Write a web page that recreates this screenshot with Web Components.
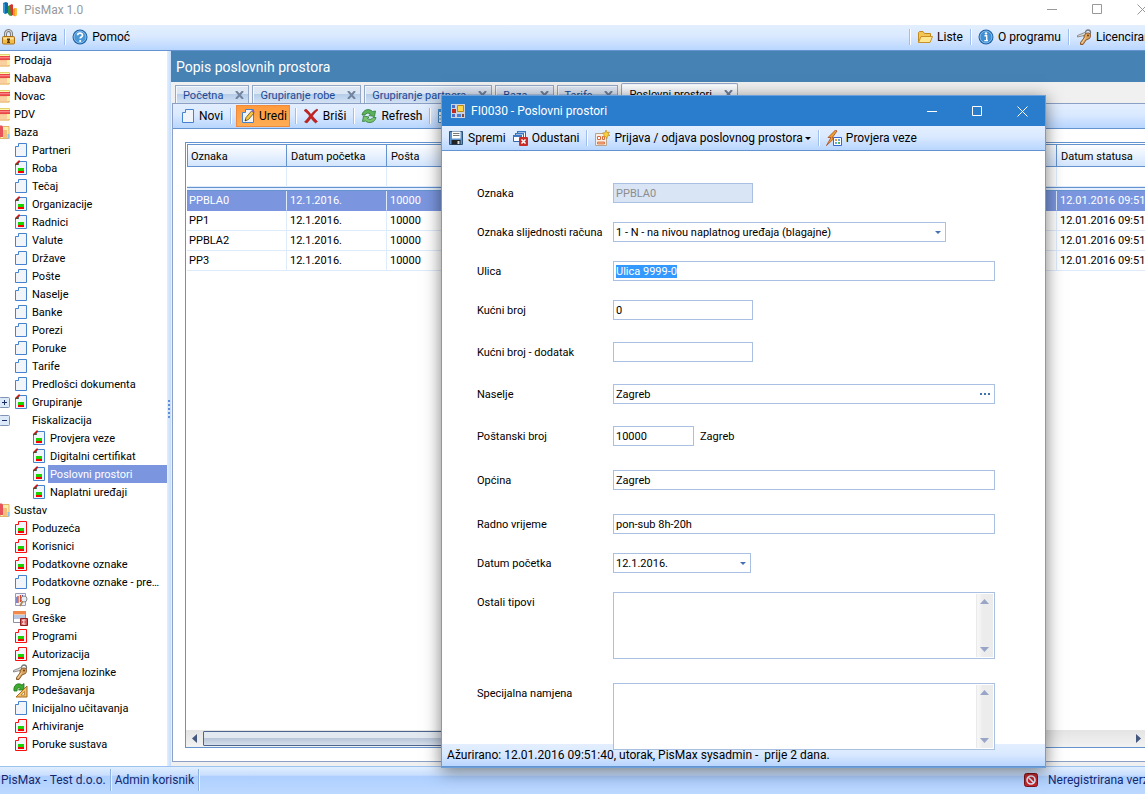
<!DOCTYPE html>
<html lang="hr">
<head>
<meta charset="utf-8">
<title>PisMax 1.0</title>
<style>
    html, body{ margin: 0; height: 100%; overflow: hidden; }
    body{
        --line: #6593cf;
        --pale: #deebfb;
        --bar: linear-gradient(#e3efff, #dae9ff 45%, #b9d6ff);
        font-family: Roboto, "Open Sans", "Liberation Sans", sans-serif;
        font-size: 11px;
        color: #000;
        background: #fff;
    }
</style>
</head>
<body>
<pis-app></pis-app>

<script>
const DOC = (edge, extra = '') => `
    <path d="M6.500 1.500H14.500V14.500H3.500V4.500H6.500Z" fill="#f1f5fa" stroke="${edge}"/>${extra}`;
const BARS = '<path d="M6 8h6v3H6z" fill="#19d400"/><path d="M6 11h6v2H6z" fill="#f00"/>';

/** Drawings of all icons, on a 16x16 canvas */
const ICONS = {
    app: `<path d="M1 2l3-1 2 1v10l-3 1-2-2z" fill="#1267a8"/><path d="M1 2l2 1v10l-2-2z" fill="#2f9bd8"/>
        <path d="M6 5l2-1 2 1v9l-2 1-2-2z" fill="#2e9a3c"/><path d="M8 4l2-1 1 1v10l-2 1z" fill="#d8322a"/>
        <path d="M11 8l2-1 2 1v6l-2 1.500-2-1z" fill="#f29a1c"/><path d="M13 8l2-1v7l-2 1z" fill="#ffc23d"/>`,
    lock: `<path d="M4.500 8V5a3 3.500 0 0 1 6 0v3" fill="none" stroke="#777" stroke-width="3"/>
        <path d="M4.500 8V5a3 3.500 0 0 1 6 0v3" fill="none" stroke="#d9d9d9" stroke-width="1.200"/>
        <rect x="1.500" y="7.500" width="12" height="7.500" rx="1" fill="#f3bd4a" stroke="#a8701c"/>
        <path d="M2.500 8.500h10v2h-10z" fill="#ffe59a"/><path d="M6 9.500h3v1.500H8.500v2h.5v1H6v-1h.5v-2H6z" fill="#5a3a12"/>`,
    help: `<circle cx="8" cy="8" r="7.500" fill="#1b5fa6"/><circle cx="8" cy="8" r="6" fill="#4a97d6" stroke="#9fd0f5" stroke-width=".8"/>
        <path d="M5.600 6.300C5.600 3.300 10.500 3.300 10.500 6.200 10.500 8 8.200 8 8.200 9.600" fill="none" stroke="#fff" stroke-width="1.700"/><circle cx="8.200" cy="12" r="1.100" fill="#fff"/>`,
    info: `<circle cx="8" cy="8" r="7.500" fill="#1b5fa6"/><circle cx="8" cy="8" r="6" fill="#3f8fd2" stroke="#9fd0f5" stroke-width=".8"/>
        <circle cx="8" cy="4.400" r="1.200" fill="#fff"/><path d="M6.500 6.800H8.700V11.500H10M6.300 11.600H10" fill="none" stroke="#fff" stroke-width="1.400"/>`,
    opened: `<path d="M1.500 13.500V3.500l1-1H6l1.500 2h6v3" fill="#f3c552" stroke="#c08a1e"/>
        <path d="M1.500 13.500L4 7.500h11.500L13 13.500z" fill="#ffe68f" stroke="#c8902a"/>`,
    keys: `<circle cx="12" cy="3.500" r="2.500" fill="none" stroke="#777" stroke-width="1.300"/>
        <path d="M10 3L1.500 6.500v1.500L8 6.500" fill="#ddd" stroke="#777" stroke-width=".8"/>
        <path d="M12 4c3 0 3 3.500 1.500 5.500L10 11l-3 4.500H4.500v-2L8 9C7.500 6 9.500 4 12 4z" fill="#dca35c" stroke="#7d4f21" stroke-width=".9"/>
        <path d="M9.500 8.500L6 14" stroke="#f8d8a5"/><circle cx="12" cy="6.500" r="1" fill="#6a4018"/>`,
    folder: `<path d="M4 2.500h11.500v11.500H4z" fill="#fbf6a8" stroke="#e3d26c"/><path d="M2 8h13v6H2z" fill="#fbd0a0" stroke="#eeb273" stroke-width=".8"/><path d="M13 8h3v5h-3z" fill="#fbf0a0"/>
        <path d="M1 4h15.500v4H1z" fill="#ea4646"/><path d="M1 5h15v1.300H1z" fill="#fa8484"/>`,
    books: `<path d="M8 2.500h7v12H6z" fill="#fbeea8" stroke="#e2b469"/><path d="M9 6h4v8H9z" fill="#f5bf7a"/>
        <path d="M2 1.500h6l1 1.500v10H2z" fill="#e8525a"/><path d="M13.500 10h2v4.500h-2z" fill="#8dc4ea"/>`,
    doc: DOC('#4583d0'),
    form: DOC('#4583d0', '<path d="M3 6V4l3.500-3.500H8V2L6 3.500V5H4z" fill="#d01818"/><path d="M4.500 3.500h2V5h-2z" fill="#176b17"/>' + BARS),
    formRed: DOC('#f80f0f', BARS),
    log: `<path d="M3.500 1.500h10v12h-10z" fill="#f2f3fa" stroke="#9a9ab5"/><path d="M6 4v7M8.500 3v7" stroke="#d1482f" stroke-width="1.300"/><path d="M4.800 5v6M10.500 3v4" stroke="#4a5bb5"/>
        <circle cx="12" cy="7" r="3" fill="#e5eef5" stroke="#888"/><path d="M10.500 9.500L8 14" stroke="#a98a55" stroke-width="1.800"/>`,
    errors: `<path d="M1.500 1.500h12v11h-12z" fill="#fff" stroke="#8b8fa5"/><path d="M1 1h13v3.500H1z" fill="#f08a4b"/><path d="M2 8h11M2 6h11" stroke="#6f8fc5"/>
        <path d="M8.500 8.500h7v7h-7z" fill="#d65a5a" stroke="#8e2020"/><path d="M13.500 10h-3l1.800 2-1.800 2h3" fill="none" stroke="#fff"/>`,
    setup: `<path d="M2 9C1 3 6 0 10 3l2-1.500V8H6.500l2-2C6.500 5 5 6.500 5 9z" fill="#3faa32" stroke="#1e7318" stroke-width=".8"/>
        <path d="M15 4v11H4z" fill="#f5c266" stroke="#a66a1f"/><path d="M12.500 9.500v3.500H9z" fill="#fff" stroke="#a66a1f" stroke-width=".7"/>`,
    edit: DOC('#4583d0', `<path d="M6 13l1-3.500L12.500 3l2.500 2-5.500 6.500z" fill="#f6c73f" stroke="#604a16" stroke-width=".8"/>
        <path d="M12.500 3l1-1.200 2.200 1.900L15 5z" fill="#7d5bd0"/><path d="M6 13l.5-1.700 1 1z" fill="#222"/>`),
    remove: `<path d="M1 2.500L3 1c2 1.500 3.500 3.500 5 5.500C9.500 4.500 11.500 2.500 14 1l1 1c-2.500 2-4 4-5.500 6 1.500 2 3 3.500 5 5.500l-2 1.500C10.500 13.500 9.500 12 8 10c-1.500 2-2.500 3.500-4 5l-2.500-1C3.500 12 5 10 6.500 8 5 6 3.500 4.500 1 2.500z" fill="#c9211d" stroke="#8d1512" stroke-width=".5"/>`,
    refresh: `<path d="M1 7C2 1.500 8 0 11.500 3.500L14.500 3l-1 5.500L8 7.500l1.500-1.500C7.500 4.500 5 5 4 7z" fill="#5bb25b" stroke="#2e7a35" stroke-width=".8"/>
        <path d="M15 9.500C14 14.500 8 16 4.500 13l-3 .5 1-5.500L8 9l-1.500 1.500c2 1.500 4.500 1 5.500-1z" fill="#79c46f" stroke="#2e7a35" stroke-width=".8"/>`,
    table: `<path d="M1.500 1.500h13v13h-13z" fill="#fff" stroke="#3d85c6"/><path d="M1 1h14v3H1z" fill="#4b9be0"/><path d="M1 7.500h14M1 11h14M5.500 4v11M10.500 4v11" stroke="#5aa4da"/>`,
    save: `<path d="M1.500 1.500h13v13h-13z" fill="#5d93cc" stroke="#2b557f"/><path d="M4 1.500h8.500v7H4z" fill="#fff"/><path d="M5 3.500h6.500M5 5.500h6.500" stroke="#777"/>
        <path d="M3.500 10h9v4.500h-9z" fill="#222"/><path d="M9.500 11h2v3h-2z" fill="#ddd"/>`,
    cancel: `<path d="M5.500 1.500h8v6h-8z" fill="#fff" stroke="#3467ad"/><path d="M3.500 3.500h8v6h-8z" fill="#fff" stroke="#3467ad"/><path d="M1.500 5.500h8v6h-8z" fill="#fff" stroke="#3467ad"/>
        <path d="M1 5h9v2H1zM3 3h9v1.500H3zM5 1h9v1.500H5z" fill="#3c77c4"/><rect x="7" y="7" width="9" height="9" rx="1" fill="#c92c26"/>
        <path d="M9.500 9.500l4 4M13.500 9.500l-4 4" stroke="#fff" stroke-width="1.500"/>`,
    register: `<path d="M1.500 3.500h11v12h-11z" fill="#f7efe4" stroke="#b7a48d"/><path d="M3.500 6.500h3v3h-3zM8.500 6.500h2v3h-2z" fill="#fff" stroke="#d9673a"/><path d="M3.500 12h7v2h-7z" fill="#f3b08a" stroke="#d9673a" stroke-width=".8"/>
        <path d="M12 0l1 2.500L15.500 2 14 4l2 1.500-2.600.3L13 8.500l-1.500-2L9 7l1.300-2L8.500 3l2.500-.2z" fill="#f9cf3c" stroke="#b98010" stroke-width=".6"/>`,
    bolt: `<path d="M9.500 0L2 7.500h3L.5 15.500 8.500 8H6L11 1z" fill="#f1a02c" stroke="#a9481a" stroke-width=".8"/>
        <path d="M7.500 7.500h8v8h-8z" fill="#fff" stroke="#3467d0"/><path d="M9 9h2v2H9z" fill="#e79a3a"/><path d="M12 9h2v2h-2z" fill="#5cabe5"/><path d="M9 12h2v2H9z" fill="#5cabe5"/><path d="M12 12h2v2h-2z" fill="#5ab552"/>`,
    window: `<path d="M1 1h14v14H1z" fill="#c9d3e2"/><path d="M2 2h3v3H2zM2 11h3v3H2z" fill="#4a6fc4"/><path d="M2 6h4v4H2z" fill="#c22a1e"/>
        <path d="M7.500 2.500h6v6h-6z" fill="#ffd54a" stroke="#b98c13"/><path d="M7 11h4v3H7z" fill="#4a7fdc"/><path d="M12 11h2v3h-2z" fill="#8a4a3a"/>`,
    ban: `<rect x="1.500" y="1.500" width="13" height="13" rx="2" fill="#c1272d" stroke="#7c1418"/><circle cx="8" cy="8" r="4" fill="none" stroke="#dfe6f5" stroke-width="1.600"/><path d="M5 5l6 6" stroke="#dfe6f5" stroke-width="1.600"/>`
};

/** Icon from the list above, chosen with the name attribute */
class PisIcon extends HTMLElement{

    constructor(){
        super();
        this.attachShadow({mode: 'open'});
    }

    connectedCallback(){
        this.shadowRoot.innerHTML = `
            <style>
                :host{ display: block; flex: none; width: 16px; height: 16px; }
                svg{ display: block; }
            </style>
            <svg width="16" height="16" viewBox="0 0 16 16" aria-hidden="true">${ICONS[this.getAttribute('name')] || ''}</svg>
        `;
    }
}
customElements.define('pis-icon', PisIcon);

/** Toolbar. Its buttons and separators are slotted */
class PisToolbar extends HTMLElement{

    constructor(){
        super();
        this.attachShadow({mode: 'open'});
    }

    connectedCallback(){
        this.shadowRoot.innerHTML = `
            <style>
                :host{
                    display: flex; align-items: center; flex: none; box-sizing: border-box;
                    height: 25px; padding: 0 3px; white-space: nowrap;
                    background: var(--bar); border-bottom: 1px solid var(--line);
                }
                :host([main]){ height: 26px; padding: 0 2px 2px 0; margin-left: -2px; }
                ::slotted(pis-button){ margin: 0 1px; }
                ::slotted(hr){ flex: none; width: 1px; height: 16px; margin: 0 4px; border: 0; background: #9cbfef; box-shadow: 1px 0 #fff; }
                ::slotted(.end){ margin-left: auto !important; }
            </style>
            <slot></slot>
        `;
    }
}
customElements.define('pis-toolbar', PisToolbar);

/** Toolbar button: icon, text and, with the menu attribute, a drop-down arrow */
class PisButton extends HTMLElement{

    constructor(){
        super();
        this.attachShadow({mode: 'open'});
    }

    connectedCallback(){
        const arrow = this.hasAttribute('menu') ? '<i></i>' : '';
        this.shadowRoot.innerHTML = `
            <style>
                :host{ display: block; flex: none; }
                button{
                    display: flex; align-items: center; gap: 4px; height: 22px; padding: 0 1px;
                    font: inherit; font-size: 12px; color: #000; background: none; border: 1px solid transparent;
                }
                :host([active]) button{ padding: 0 2px; background: linear-gradient(#ff9a3d, #ffad55); border-color: #f08a3c; }
                i{ margin-left: -2px; border: 3px solid transparent; border-top-color: #000; border-bottom: 0; }
            </style>
            <button type="button"><pis-icon name="${this.getAttribute('icon')}"></pis-icon><slot></slot>${arrow}</button>
        `;
    }
}
customElements.define('pis-button', PisButton);

/** Minimize, maximize and close buttons of a window */
class PisWindowButtons extends HTMLElement{

    constructor(){
        super();
        this.attachShadow({mode: 'open'});
    }

    connectedCallback(){
        const button = (label, d) => `
            <button type="button" aria-label="${label}">
                <svg width="11" height="11" viewBox="0 0 11 11"><path d="${d}" fill="none" stroke="currentColor"/></svg>
            </button>`;
        this.shadowRoot.innerHTML = `
            <style>
                :host{ display: flex; margin-left: auto; }
                button{ display: grid; place-items: center; width: 45px; padding: 0; background: none; border: 0; color: inherit; }
            </style>
            ${button('Smanji', 'M0 5.500H10')}
            ${button('Povećaj', 'M.5 .5H9.500V9.500H.5Z')}
            ${button('Zatvori', 'M.5 .5L10.500 10.500M10.500 .5L.5 10.500')}
        `;
    }
}
customElements.define('pis-window-buttons', PisWindowButtons);

/** Menu tree on the left side */
class PisTree extends HTMLElement{

    constructor(){
        super();
        this.attachShadow({mode: 'open'});
    }

    connectedCallback(){
        this.render();
    }

    // [level, icon, text, state]
    get items(){
        return [
            [0, 'folder', 'Prodaja'], [0, 'folder', 'Nabava'], [0, 'folder', 'Novac'], [0, 'folder', 'PDV'],
            [0, 'books', 'Baza'],
            [1, 'doc', 'Partneri'], [1, 'form', 'Roba'], [1, 'doc', 'Tečaj'], [1, 'form', 'Organizacije'],
            [1, 'form', 'Radnici'], [1, 'doc', 'Valute'], [1, 'doc', 'Države'], [1, 'doc', 'Pošte'],
            [1, 'doc', 'Naselje'], [1, 'doc', 'Banke'], [1, 'doc', 'Porezi'], [1, 'doc', 'Poruke'],
            [1, 'doc', 'Tarife'], [1, 'doc', 'Predlošci dokumenta'],
            [1, 'form', 'Grupiranje', 'plus'], [1, 'none', 'Fiskalizacija', 'minus'],
            [2, 'form', 'Provjera veze'], [2, 'form', 'Digitalni certifikat'],
            [2, 'form', 'Poslovni prostori', 'selected'], [2, 'form', 'Naplatni uređaji'],
            [0, 'books', 'Sustav'],
            [1, 'formRed', 'Poduzeća'], [1, 'formRed', 'Korisnici'], [1, 'formRed', 'Podatkovne oznake'],
            [1, 'doc', 'Podatkovne oznake - pregled'], [1, 'log', 'Log'], [1, 'errors', 'Greške'],
            [1, 'formRed', 'Programi'], [1, 'formRed', 'Autorizacija'], [1, 'keys', 'Promjena lozinke'],
            [1, 'setup', 'Podešavanja'], [1, 'doc', 'Inicijalno učitavanja'],
            [1, 'formRed', 'Arhiviranje'], [1, 'formRed', 'Poruke sustava']
        ];
    }

    render(){
        const style = `
            <style>
                :host{ display: block; overflow: hidden; background: #fff; }
                ul{ list-style: none; margin: 0 0 0 -6px; padding: 0; }
                li{ display: flex; align-items: center; height: 18px; white-space: nowrap; }
                .pad{ flex: none; display: flex; justify-content: center; width: 18px; }
                .pad svg{ display: block; margin-left: 3px; }
                span{ overflow: hidden; text-overflow: ellipsis; box-sizing: border-box; height: 18px; padding: 1px 2px 0; margin-left: 2px; line-height: 17px; }
                .selected span{ flex: 1; background: #7b96df; color: #fff; }
            </style>
        `;
        const box = sign => `<svg width="11" height="11" viewBox="0 0 11 11">
            <rect x=".5" y=".5" width="10" height="10" rx="1" fill="#dce9f8" stroke="#7f93b5"/>
            <path d="M3 5.500H8${sign === 'plus' ? 'M5.500 3V8' : ''}" stroke="#1b2f66"/></svg>`;
        const rows = this.items.map(([level, icon, text, state]) => {
            const opener = state === 'plus' || state === 'minus';
            const pads = Array.from({length: level}, (_, i) =>
                `<div class="pad">${opener && i === level - 1 ? box(state) : ''}</div>`).join('');
            return `<li role="treeitem" class="${state || ''}">${pads}<pis-icon name="${icon}"></pis-icon><span>${text}</span></li>`;
        });
        this.shadowRoot.innerHTML = style + `<ul role="tree">${rows.join('')}</ul>`;
    }
}
customElements.define('pis-tree', PisTree);

/** Strip of document tabs */
class PisTabs extends HTMLElement{

    constructor(){
        super();
        this.attachShadow({mode: 'open'});
    }

    connectedCallback(){
        const tabs = ['Početna', 'Grupiranje robe', 'Grupiranje partnera', 'Baza', 'Tarife', 'Poslovni prostori'];
        this.shadowRoot.innerHTML = `
            <style>
                :host{ display: flex; align-items: flex-end; gap: 3px; height: 21px; padding-left: 4px; background: #f0f0f0; }
                button{
                    display: flex; align-items: center; gap: 12px; box-sizing: border-box; height: 18px; padding: 1px 4px 0 7px;
                    font: inherit; color: #1e4a94; border: 1px solid #93a7c8; border-bottom: 0; box-shadow: inset 1px 1px #f4f8fd;
                    background: linear-gradient(#dde7f4 45%, #b6cdea 50%, #d3e2f4); white-space: nowrap;
                }
                button:last-of-type{ height: 20px; color: #000; background: linear-gradient(#fff, #e9f1fc); border-radius: 2px 2px 0 0; }
                svg{ display: block; }
            </style>
            ${tabs.map(t => `<button type="button" role="tab">${t}
                <svg width="9" height="8" viewBox="0 0 9 8"><path d="M1 0L8 8M8 0L1 8" stroke="#72839f" stroke-width="2"/></svg></button>`).join('')}
        `;
    }
}
customElements.define('pis-tabs', PisTabs);

/** Data grid with filter row and horizontal scroll bar */
class PisGrid extends HTMLElement{

    constructor(){
        super();
        this.attachShadow({mode: 'open'});
    }

    connectedCallback(){
        this.render();
    }

    render(){
        const style = `
            <style>
                :host{ display: flex; flex-direction: column; overflow: hidden; border: 1px solid var(--line); background: #fff; }
                .view{ flex: 1; overflow: hidden; padding: 1px 0 0 1px; }
                table{ width: 100%; table-layout: fixed; border-collapse: separate; border-spacing: 0; }
                .c{ width: 100px; }
                .d{ width: 90px; }
                th, td{
                    box-sizing: border-box; height: 20px; padding: 0 3px; overflow: hidden; white-space: nowrap;
                    text-align: left; font-weight: normal; border-right: 1px solid var(--pale); border-bottom: 1px solid var(--pale);
                }
                td:first-child{ padding-left: 2px; }
                th{ height: 23px; padding: 1px 4px 0; background: linear-gradient(#fdfeff, #d3e5fd); border: solid var(--line); border-width: 1px 1px 1px 0; }
                th:first-child{ padding-left: 3px; border-left-width: 1px; }
                .line td{ height: 4px; padding: 0; border: solid var(--line); border-width: 1px 0; background: #e7f0fc; }
                .selected td{ background: #7b96df; color: #fff; border-bottom-color: #7b96df; }
                .scroll{ display: flex; align-items: center; height: 17px; background: linear-gradient(#e4e4e4, #f2f2f2); }
                .scroll svg{ flex: none; width: 17px; }
                .scroll i{ flex: 0 1 520px; height: 13px; border: 1px solid #4d648f; border-radius: 1px; background: linear-gradient(#e2e8ef 45%, #b9c6d8 50%, #d5dfec); }
                .scroll b{ flex: 1; }
            </style>
        `;
        const row = (code, cls) => `<tr class="${cls || ''}"><td>${code}</td><td>12.1.2016.</td><td>10000</td><td></td><td>12.01.2016 09:51:40</td></tr>`;
        const body = `
            <div class="view"><table>
                <colgroup><col class="c"><col class="c"><col class="c"><col><col class="d"></colgroup>
                <thead><tr><th>Oznaka</th><th>Datum početka</th><th>Pošta</th><th></th><th>Datum statusa</th></tr></thead>
                <tbody>
                    <tr><td></td><td></td><td></td><td></td><td></td></tr>
                    <tr class="line"><td colspan="5"></td></tr>
                    ${row('PPBLA0', 'selected')}${row('PP1')}${row('PPBLA2')}${row('PP3')}
                </tbody>
            </table></div>
            <div class="scroll">
                <svg height="9" viewBox="0 0 17 9"><path d="M11 0V9L6 4.500Z" fill="#44587f"/></svg><i></i><b></b>
                <svg height="9" viewBox="0 0 17 9"><path d="M6 0V9L11 4.500Z" fill="#44587f"/></svg>
            </div>
        `;
        this.shadowRoot.innerHTML = style + body;
    }
}
customElements.define('pis-grid', PisGrid);

/** Form field. type: text, select, lookup, date, memo. size: short, code, date, wide */
class PisField extends HTMLElement{

    constructor(){
        super();
        this.attachShadow({mode: 'open'});
    }

    connectedCallback(){
        this.render();
        const input = this.shadowRoot.querySelector('input');
        if(input && this.hasAttribute('marked')){
            input.focus();
            input.select();
        }
    }

    control(){
        const value = this.getAttribute('value') || '';
        const off = this.hasAttribute('disabled') ? 'disabled' : '';
        const input = `<input id="f" type="text" value="${value}" ${off}>`;
        switch(this.getAttribute('type')){
            case 'select': return `<select id="f"><option>${value}</option></select><i class="arrow"></i>`;
            case 'date': return input + '<button type="button" aria-label="Kalendar"><i class="arrow"></i></button>';
            case 'lookup': return input + `<button type="button" aria-label="Traži"><svg width="11" height="2" viewBox="0 0 11 2">
                <path d="M0 0h2v2H0zM4 0h2v2H4zM8 0h2v2H8z" fill="#4472b0"/></svg></button>`;
            case 'memo': return `<textarea id="f"></textarea><div class="bar">
                <svg width="9" height="5" viewBox="0 0 9 5"><path d="M0 5H9L4.500 0Z" fill="#98a5c7"/></svg>
                <svg width="9" height="5" viewBox="0 0 9 5"><path d="M0 0H9L4.500 5Z" fill="#98a5c7"/></svg></div>`;
            default: return input;
        }
    }

    render(){
        const style = `
            <style>
                :host{ display: flex; align-items: flex-start; height: 20px; margin-bottom: 22px; line-height: 21px; }
                :host([gap="small"]){ margin-bottom: 19px; }
                :host([gap="large"]){ margin-bottom: 24px; }
                :host([gap="none"]){ margin-bottom: 0; }
                :host([type="memo"]){ height: 67px; }
                label{ flex: none; width: 136px; white-space: nowrap; }
                .box{ display: flex; align-items: center; box-sizing: border-box; height: 100%; width: 382px; border: 1px solid #a9c0e2; background: #fff; }
                :host([size="short"]) .box{ width: 140px; }
                :host([size="code"]) .box{ width: 81px; }
                :host([size="date"]) .box{ width: 138px; }
                :host([size="wide"]) .box{ width: 333px; }
                :host([type="memo"]) .box{ align-items: stretch; }
                :host([disabled]) .box{ background: #d9e4f5; }
                input, select, textarea{
                    flex: 1; min-width: 0; box-sizing: border-box; margin: 0; padding: 0 2px; border: 0; outline: 0;
                    font: inherit; line-height: normal; color: #000; background: none; appearance: none; resize: none;
                }
                input:disabled{ color: #8d8d8d; }
                ::selection{ background: #3399ff; color: #fff; }
                button{ display: flex; padding: 0; background: none; border: 0; }
                button svg{ margin-right: 3px; }
                .arrow{ flex: none; margin-right: 4px; border: 3px solid transparent; border-top-color: #4472b0; border-bottom: 0; }
                .bar{ display: flex; flex-direction: column; justify-content: space-between; align-items: center; width: 17px; margin: 1px; padding: 5px 0; box-sizing: border-box; background: linear-gradient(90deg, #e4e4e4, #f8f8f8 10%, #ececec 40%); }
                ::slotted(*){ margin-left: 6px; }
            </style>
        `;
        this.shadowRoot.innerHTML = style + `
            <label for="f">${this.getAttribute('label')}</label>
            <div class="box">${this.control()}</div><slot></slot>`;
    }
}
customElements.define('pis-field', PisField);

/** Floating window with title, toolbar, form and footer */
class PisDialog extends HTMLElement{

    constructor(){
        super();
        this.attachShadow({mode: 'open'});
    }

    connectedCallback(){
        this.shadowRoot.innerHTML = `
            <style>
                :host{ display: block; box-sizing: border-box; background: #fff; border: 1px solid #69a0dc; box-shadow: 0 3px 16px rgba(0, 0, 0, .5); }
                header{ display: flex; height: 30px; background: #2a7ccd; color: #fff; font-size: 12px; }
                header pis-icon{ margin: 7px 5px 0 8px; }
                header span{ line-height: 30px; }
                form{ position: relative; z-index: 1; padding: 32px 35px 0; margin-bottom: -6px; }
                footer{ height: 22px; padding-left: 5px; line-height: 23px; font-size: 12px; background: var(--bar); border-bottom: 1px solid var(--line); white-space: pre; }
            </style>
            <header><pis-icon name="window"></pis-icon><span>${this.getAttribute('caption')}</span><pis-window-buttons></pis-window-buttons></header>
            <slot name="tools"></slot>
            <form><slot></slot></form>
            <footer>${this.getAttribute('footer')}</footer>
        `;
    }
}
customElements.define('pis-dialog', PisDialog);

/** Main window */
class PisApp extends HTMLElement{

    constructor(){
        super();
        this.attachShadow({mode: 'open'});
    }

    connectedCallback(){
        this.render();
    }

    render(){
        const style = `
            <style>
                /* the window is a little wider than the screen */
                :host{ display: flex; flex-direction: column; width: calc(100% + 20px); height: 100%; }
                .title{ display: flex; flex: none; align-items: stretch; height: 25px; padding: 0; color: #999; font-size: 12px; }
                .title pis-icon{ margin: 1px 6px 0 2px; }
                .title span{ line-height: 20px; }
                .title pis-window-buttons{ height: 19px; }
                .middle{ flex: 1; display: flex; min-height: 0; }
                pis-tree{ flex: none; width: 167px; }
                .split{ flex: none; display: flex; flex-direction: column; align-items: center; justify-content: center; gap: 2px; width: 4px; background: linear-gradient(90deg, #e3efff, #c4dcfb); }
                .split i{ width: 2px; height: 2px; background: #5e8fd6; }
                .work{ flex: 1; min-width: 0; display: flex; flex-direction: column; background: #f0f0f0; }
                h1{ flex: none; margin: 0; padding: 1px 0 0 5px; line-height: 30px; font-size: 14px; font-weight: normal; background: #4682b4; color: #fff; }
                .page{ flex: 1; min-height: 0; display: flex; flex-direction: column; margin: 0 4px 4px 1px; border: 1px solid #8ba0c4; background: #fff; }
                pis-grid{ flex: 1; min-height: 0; margin: 13px 12px; }
                .status{ flex: none; display: flex; align-items: center; box-sizing: border-box; height: 28px; padding: 0 4px 1px 1px; font-size: 12px; color: #15286f; white-space: nowrap; border-top: 1px solid #9cc2f2; background: linear-gradient(#e0eeff, #c9dffe 30%, #aecfff 35%, #bcd9ff); }
                .status i{ width: 1px; height: 22px; margin: 0 4px; background: #8db2e3; box-shadow: 1px 0 #e5f0ff; }
                .status pis-icon{ margin: 0 9px 0 auto; }
                pis-dialog{ position: absolute; left: 441px; top: 95px; width: 605px; }
            </style>
        `;
        const body = `
            <div class="title"><pis-icon name="app"></pis-icon><span>PisMax 1.0</span><pis-window-buttons></pis-window-buttons></div>
            <pis-toolbar main>
                <pis-button icon="lock">Prijava</pis-button><hr>
                <pis-button icon="help">Pomoć</pis-button>
                <hr class="end"><pis-button icon="opened">Liste</pis-button><hr>
                <pis-button icon="info">O programu</pis-button><hr>
                <pis-button icon="keys">Licenciranje</pis-button>
            </pis-toolbar>
            <div class="middle">
                <pis-tree></pis-tree>
                <div class="split"><i></i><i></i><i></i><i></i><i></i></div>
                <div class="work">
                    <h1>Popis poslovnih prostora</h1>
                    <pis-tabs></pis-tabs>
                    <div class="page">
                        <pis-toolbar>
                            <pis-button icon="doc">Novi</pis-button><hr>
                            <pis-button icon="edit" active>Uredi</pis-button><hr>
                            <pis-button icon="remove">Briši</pis-button><hr>
                            <pis-button icon="refresh">Refresh</pis-button><hr>
                            <pis-button icon="table"></pis-button>
                        </pis-toolbar>
                        <pis-grid></pis-grid>
                    </div>
                </div>
            </div>
            <div class="status">
                <span>PisMax - Test d.o.o.</span><i></i><span>Admin korisnik</span><i></i>
                <pis-icon name="ban"></pis-icon><span>Neregistrirana verzija</span>
            </div>
            <pis-dialog caption="FI0030 - Poslovni prostori" footer="Ažurirano: 12.01.2016 09:51:40, utorak, PisMax sysadmin -  prije 2 dana.">
                <pis-toolbar slot="tools">
                    <pis-button icon="save">Spremi</pis-button>
                    <pis-button icon="cancel">Odustani</pis-button><hr>
                    <pis-button icon="register" menu>Prijava / odjava poslovnog prostora</pis-button><hr>
                    <pis-button icon="bolt">Provjera veze</pis-button>
                </pis-toolbar>
                <pis-field label="Oznaka" size="short" value="PPBLA0" disabled gap="small"></pis-field>
                <pis-field label="Oznaka slijednosti računa" type="select" size="wide" value="1 - N - na nivou naplatnog uređaja (blagajne)" gap="small"></pis-field>
                <pis-field label="Ulica" value="Ulica 9999-0" marked gap="small"></pis-field>
                <pis-field label="Kućni broj" size="short" value="0"></pis-field>
                <pis-field label="Kućni broj - dodatak" size="short"></pis-field>
                <pis-field label="Naselje" type="lookup" value="Zagreb"></pis-field>
                <pis-field label="Poštanski broj" size="code" value="10000" gap="large"><span>Zagreb</span></pis-field>
                <pis-field label="Općina" value="Zagreb" gap="large"></pis-field>
                <pis-field label="Radno vrijeme" value="pon-sub 8h-20h" gap="small"></pis-field>
                <pis-field label="Datum početka" type="date" size="date" value="12.1.2016." gap="small"></pis-field>
                <pis-field label="Ostali tipovi" type="memo" gap="large"></pis-field>
                <pis-field label="Specijalna namjena" type="memo" gap="none"></pis-field>
            </pis-dialog>
        `;
        this.shadowRoot.innerHTML = style + body;
    }
}
customElements.define('pis-app', PisApp);
</script>
</body>
</html>
